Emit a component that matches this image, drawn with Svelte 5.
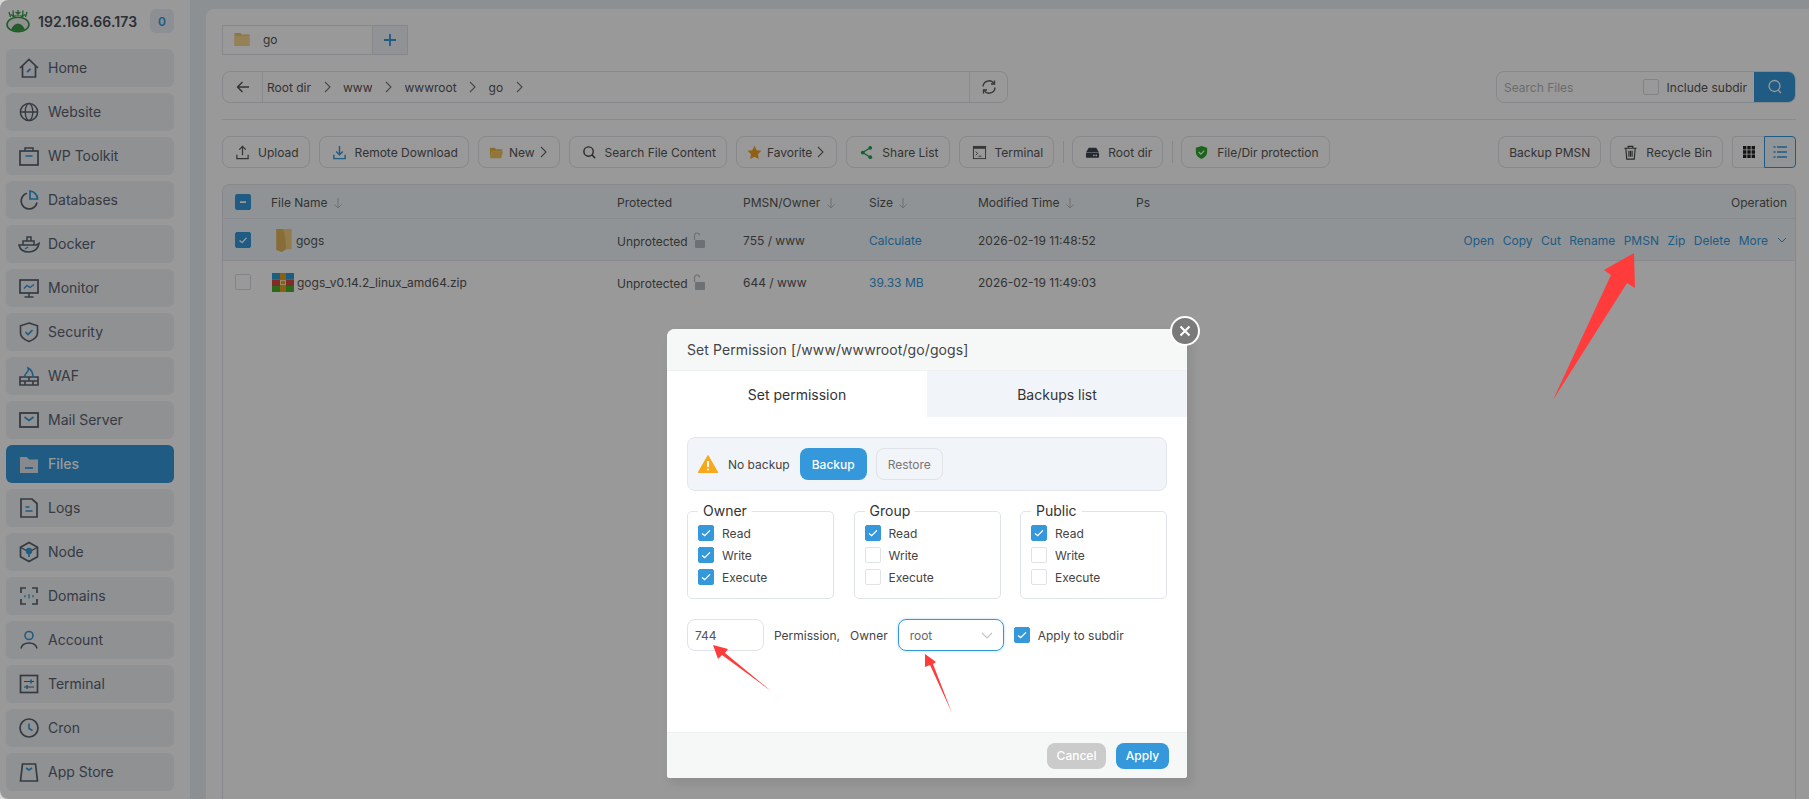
<script>
  const D = '#58606e';
  const B = '#3498db';
  const nav = [
    ['Home', `<path d="M3 12 12 3.5 21 12M5.5 10v11h13V10" fill="none" stroke="${D}" stroke-width="1.7"/><path d="M10 16l3.5-3" stroke="${B}" stroke-width="1.7"/>`],
    ['Website', `<circle cx="12" cy="12" r="8.6" fill="none" stroke="${D}" stroke-width="1.5"/><ellipse cx="12" cy="12" rx="3.8" ry="8.6" fill="none" stroke="${D}" stroke-width="1.3"/><path d="M3.4 12h17.2" stroke="${D}" stroke-width="1.3"/>`],
    ['WP Toolkit', `<rect x="3" y="7" width="18" height="14" fill="none" stroke="${D}" stroke-width="1.7"/><path d="M8 7V4h8v3" fill="none" stroke="${D}" stroke-width="1.5"/><path d="M8.5 12h7" stroke="${B}" stroke-width="1.7"/>`],
    ['Databases', `<path d="M10 5.2A8 8 0 1 0 20 14.5" fill="none" stroke="${D}" stroke-width="1.7"/><path d="M13 3.2a8 8 0 0 1 7.6 7.8H13z" fill="none" stroke="${B}" stroke-width="1.7"/>`],
    ['Docker', `<path d="M2 13h17c1.2 0 2.2-1 3-1.6-.5 4.6-4 8.6-10 8.6-5 0-9-2.400-10-7z" fill="none" stroke="${D}" stroke-width="1.6"/><path d="M6 13V9h4V5h4v4h3v4M10 9h4" fill="none" stroke="${D}" stroke-width="1.5"/><path d="M8 17l3-2" stroke="${B}" stroke-width="1.5"/>`],
    ['Monitor', `<rect x="3" y="4" width="18" height="13" fill="none" stroke="${D}" stroke-width="1.7"/><path d="M12 17v4M7.500 21h9" stroke="${D}" stroke-width="1.5"/><path d="M7 12.500l3-3 3 2 4-3" fill="none" stroke="${B}" stroke-width="1.4"/>`],
    ['Security', `<path d="M12 3l8.500 2.800V13c0 4-4 6.800-8.500 8.500C7.500 19.800 3.500 17 3.500 13V5.800z" fill="none" stroke="${D}" stroke-width="1.6"/><path d="M8.500 12l2.500 2.500 4.500-4.500" fill="none" stroke="${B}" stroke-width="1.6"/>`],
    ['WAF', `<path d="M3 13h18v8H3zM3 17h18M12 13v4M8 17v4M16 17v4" fill="none" stroke="${D}" stroke-width="1.6"/><path d="M8 13c-1-3 2-4 3-6 .4-1 .3-2 0-3 3 1.500 5 5 5 9" fill="none" stroke="${B}" stroke-width="1.5"/>`],
    ['Mail Server', `<rect x="3" y="5" width="18" height="14" fill="none" stroke="${D}" stroke-width="1.8"/><path d="M7.500 9l4.500 3.500L16.500 9" fill="none" stroke="${B}" stroke-width="1.6"/>`],
    ['Files', `<path d="M3 5h7l2 2.500h9V21H3z" fill="#dfe7ee"/><path d="M8 16h8" stroke="${B}" stroke-width="1.7"/>`],
    ['Logs', `<path d="M4 3h11l5 4.500V21H4z" fill="none" stroke="${D}" stroke-width="1.7"/><path d="M8.500 11h4M8.500 15h7" stroke="${B}" stroke-width="1.6"/>`],
    ['Node', `<path d="M12 2.500l8.500 4.800v9.400L12 21.500l-8.500-4.800V7.300z" fill="none" stroke="${D}" stroke-width="1.7"/><path d="M3.500 7.300L12 12l8.500-4.700" fill="none" stroke="${D}" stroke-width="1.3"/><circle cx="12" cy="11" r="3.200" fill="${B}"/><path d="M12 12v5" stroke="${B}" stroke-width="1.700"/>`],
    ['Domains', `<path d="M4 9V4h5M15 4h5v5M20 15v5h-5M9 20H4v-5" fill="none" stroke="${D}" stroke-width="1.7"/><path d="M8 11v2.500M12 10v4.500M16 11v2.500" stroke="${B}" stroke-width="1.200"/>`],
    ['Account', `<circle cx="12" cy="7.500" r="4" fill="none" stroke="${B}" stroke-width="1.6"/><path d="M4 20.500c.8-4 4-5.500 8-5.500s7.200 1.500 8 5.500" fill="none" stroke="${D}" stroke-width="1.600"/>`],
    ['Terminal', `<rect x="3.500" y="3.500" width="17" height="17" fill="none" stroke="${D}" stroke-width="1.700"/><path d="M7 9.500h10M7 15h10" stroke="${D}" stroke-width="1.200"/><path d="M14 7.500v4M10 13v4" stroke="${B}" stroke-width="1.700"/>`],
    ['Cron', `<circle cx="12" cy="12" r="9" fill="none" stroke="${D}" stroke-width="1.700"/><path d="M12 7.500V12.500l3.500 2" fill="none" stroke="${B}" stroke-width="1.600"/>`],
    ['App Store', `<path d="M5.500 4h13l2 17H3.500z" fill="none" stroke="${D}" stroke-width="1.700"/><path d="M9 8l3 2 3-2" fill="none" stroke="${B}" stroke-width="1.600"/>`]
  ];
  const perms = [
    ['Owner', [true, true, true]],
    ['Group', [true, false, false]],
    ['Public', [true, false, false]]
  ];
  const kinds = ['Read', 'Write', 'Execute'];
  const ops = ['Open', 'Copy', 'Cut', 'Rename', 'PMSN', 'Zip', 'Delete'];
</script>

<div class="page">
  <aside class="side">
    <div class="brand">
      <svg class="logo" viewBox="0 0 24 24" width="24" height="24">
        <ellipse cx="12" cy="15.500" rx="11" ry="7.300" fill="#f2f2f2" stroke="#3a9a44" stroke-width="1.600"/>
        <path d="M5 20.500c1.800-4 4.500-6 7-6s5.200 2 7 6c-4 2-10 2-14 0z" fill="#3a9a44"/>
        <path d="M4.500 8 3 3M7.500 7.500 7 1.500M5 5.500 7.500 7.500l3-1M12 7V1M12 5 9.500 3M12 5l2.500-2M16.500 7.500 17 1.500M19 5.500l-2.500 2-3-1M19.500 8 21 3" stroke="#3a9a44" stroke-width="1.300" fill="none"/>
      </svg>
      <span class="ip">192.168.66.173</span>
      <span class="count">0</span>
    </div>
    <nav>
      {#each nav as [label, icon]}
        <div class="item" class:on={label === 'Files'}>
          <svg viewBox="0 0 24 24" width="24" height="24">{@html icon}</svg>
          <span>{label}</span>
        </div>
      {/each}
    </nav>
  </aside>

  <main class="wrap">
    <div class="card">
      <div class="tabs">
        <div class="tab">
          <svg viewBox="0 0 24 24" width="18" height="18"><path d="M2 4h8l2 2h10v15H2z" fill="#f0c66e"/><path d="M2 8h20v13H2z" fill="#f7d98f"/></svg>
          <span>go</span>
        </div>
        <div class="plus">
          <svg viewBox="0 0 14 14" width="14" height="14"><path d="M7 1v12M1 7h12" stroke="#3498db" stroke-width="1.800"/></svg>
        </div>
      </div>

      <div class="pathline">
        <div class="crumbs">
          <div class="back">
            <svg viewBox="0 0 14 14" width="14" height="14"><path d="M13 7H1.500M6.500 2 1.500 7l5 5" fill="none" stroke="#555" stroke-width="1.400"/></svg>
          </div>
          <div class="trail">
            {#each ['Root dir', 'www', 'wwwroot', 'go'] as c}
              <span>{c}</span>
              <svg viewBox="0 0 7 12" width="7" height="12"><path d="M1 1l5 5-5 5" fill="none" stroke="#777" stroke-width="1.100"/></svg>
            {/each}
          </div>
          <div class="reload">
            <svg viewBox="0 0 16 16" width="16" height="16"><path d="M2 7.500A6 6 0 0 1 13 4.500M14 8.500A6 6 0 0 1 3 11.500" fill="none" stroke="#555" stroke-width="1.300"/><path d="M13.500 1.500v3.500H10M2.500 14.500V11H6" fill="none" stroke="#555" stroke-width="1.300"/></svg>
          </div>
        </div>
        <div class="search">
          <span class="ph">Search Files</span>
          <i class="box small"></i>
          <span class="inc">Include subdir</span>
          <div class="sbtn">
            <svg viewBox="0 0 16 16" width="16" height="16"><circle cx="7.500" cy="7" r="5.500" fill="none" stroke="#fff" stroke-width="1.300"/><path d="M11 11l3 3" stroke="#fff" stroke-width="1.300"/></svg>
          </div>
        </div>
      </div>

      <div class="rule"></div>

      <div class="tools">
        <button>
          <svg viewBox="0 0 16 16" width="15" height="15"><path d="M8 11V2M4.500 5 8 1.500 11.500 5M2 10.500V14.500h12v-4" fill="none" stroke="#555" stroke-width="1.300"/></svg>Upload
        </button>
        <button>
          <svg viewBox="0 0 16 16" width="15" height="15"><path d="M8 1v9M4.500 7 8 10.500 11.500 7M2 10.500V14.500h12v-4" fill="none" stroke="#3498db" stroke-width="1.500"/></svg>Remote Download
        </button>
        <button class="tight">
          <svg viewBox="0 0 16 16" width="15" height="15"><path d="M1 3h5l1.500 1.500H14V7H3L1 13z" fill="#e8b64c"/><path d="M3 7h12l-2 7H1z" fill="#f2c462"/></svg>New
          <svg viewBox="0 0 7 12" width="7" height="12"><path d="M1 1l5 5-5 5" fill="none" stroke="#666" stroke-width="1.100"/></svg>
        </button>
        <button>
          <svg viewBox="0 0 16 16" width="15" height="15"><circle cx="7" cy="7" r="5" fill="none" stroke="#444" stroke-width="1.500"/><path d="M10.500 10.500 14 14" stroke="#444" stroke-width="1.600"/></svg>Search File Content
        </button>
        <button class="tight">
          <svg viewBox="0 0 16 16" width="15" height="15"><path d="M8 .8l2.300 4.700 5 .7-3.600 3.600.9 5.200L8 12.500 3.400 15l.9-5.200L.7 6.200l5-.7z" fill="#f0a020"/></svg>Favorite
          <svg viewBox="0 0 7 12" width="7" height="12"><path d="M1 1l5 5-5 5" fill="none" stroke="#666" stroke-width="1.100"/></svg>
        </button>
        <button>
          <svg viewBox="0 0 16 16" width="15" height="15"><path d="M12 3 4 8l8 5" fill="none" stroke="#20a050" stroke-width="1.400"/><circle cx="12" cy="3" r="2" fill="#20a050"/><circle cx="4" cy="8" r="2" fill="#20a050"/><circle cx="12" cy="13" r="2" fill="#20a050"/></svg>Share List
        </button>
        <button>
          <svg viewBox="0 0 16 16" width="15" height="15"><rect x="1.500" y="1.500" width="13" height="13" fill="none" stroke="#555"/><path d="M1.500 3h13" stroke="#555" stroke-width="2"/><path d="M4 7l2 2-2 2M7 12h3" fill="none" stroke="#555"/></svg>Terminal
        </button>
        <i class="sep"></i>
        <button>
          <svg viewBox="0 0 16 16" width="15" height="15"><path d="M4 3h8l3 5H1z" fill="#3d4450"/><rect x="1" y="8.500" width="14" height="5" rx="1" fill="#3d4450"/><circle cx="12" cy="11" r=".9" fill="#fff"/><circle cx="9.500" cy="11" r=".9" fill="#fff"/></svg>Root dir
        </button>
        <i class="sep"></i>
        <button>
          <svg viewBox="0 0 16 16" width="15" height="15"><path d="M8 1l6 2v5c0 3-2.500 5.500-6 7-3.500-1.500-6-4-6-7V3z" fill="#2ea82e"/><path d="M5 7.500l2.200 2.200L11 6" fill="none" stroke="#fff" stroke-width="1.300"/></svg>File/Dir protection
        </button>
        <div class="grow"></div>
        <button class="bp">Backup PMSN</button>
        <button>
          <svg viewBox="0 0 16 16" width="15" height="15"><path d="M1.500 3.500h13M5.500 3.500V1.500h5v2M3 3.500l1 11.500h8l1-11.500M6.300 6v6.500M8 6v6.500M9.700 6v6.500" fill="none" stroke="#444" stroke-width="1.200"/></svg>Recycle Bin
        </button>
        <div class="views">
          <div class="view">
            <svg viewBox="0 0 14 14" width="14" height="14"><path d="M1 1h3.400v3.400H1zM5.300 1h3.400v3.400H5.300zM9.600 1H13v3.400H9.600zM1 5.300h3.400v3.400H1zM5.300 5.300h3.400v3.400H5.300zM9.600 5.300H13v3.400H9.600zM1 9.600h3.400V13H1zM5.300 9.600h3.400V13H5.300zM9.600 9.600H13V13H9.600z" fill="#222"/></svg>
          </div>
          <div class="view act">
            <svg viewBox="0 0 14 14" width="14" height="14"><path d="M4 2h10M4 7h10M4 12h10M.5 2h2M.5 7h2M.5 12h2" stroke="#3498db" stroke-width="1.400"/></svg>
          </div>
        </div>
      </div>

      <div class="table">
        <div class="row head">
          <i class="box on"><svg viewBox="0 0 16 16"><path d="M4.500 8h7" stroke="#fff" stroke-width="2"/></svg></i>
          <span>File Name <svg class="sort" viewBox="0 0 10 12" width="10" height="12"><path d="M5 1v10M1.500 7.500 5 11l3.500-3.500" fill="none" stroke="#bbb"/></svg></span>
          <span>Protected</span>
          <span>PMSN/Owner <svg class="sort" viewBox="0 0 10 12" width="10" height="12"><path d="M5 1v10M1.500 7.500 5 11l3.500-3.500" fill="none" stroke="#bbb"/></svg></span>
          <span>Size <svg class="sort" viewBox="0 0 10 12" width="10" height="12"><path d="M5 1v10M1.500 7.500 5 11l3.500-3.500" fill="none" stroke="#bbb"/></svg></span>
          <span>Modified Time <svg class="sort" viewBox="0 0 10 12" width="10" height="12"><path d="M5 1v10M1.500 7.500 5 11l3.500-3.500" fill="none" stroke="#bbb"/></svg></span>
          <span>Ps</span>
          <span class="end">Operation</span>
        </div>

        <div class="row sel">
          <i class="box on"><svg viewBox="0 0 16 16"><path d="M4 8.500l3 2.500 5-5.500" fill="none" stroke="#fff" stroke-width="1.500"/></svg></i>
          <span class="name">
            <svg viewBox="0 0 18 26" width="18" height="25"><path d="M1 1h16v21H7v3l-6-2z" fill="#f5cf7f"/><path d="M1 1h7c2 6 3 12 3 21l-4 3-6-2z" fill="#e2b65e"/></svg>
            gogs
          </span>
          <span class="prot">Unprotected
            <svg viewBox="0 0 14 16" width="14" height="16"><path d="M3.500 8V3.500a2.500 2.500 0 0 1 5 0" fill="none" stroke="#bbb" stroke-width="1.200"/><rect x="4" y="8" width="10" height="8" rx="1" fill="#b5bcc4"/></svg>
          </span>
          <span>755 / www</span>
          <span class="link">Calculate</span>
          <span>2026-02-19 11:48:52</span>
          <span></span>
          <span class="ops">
            {#each ops as o}<span class="link">{o}</span>{/each}
            <span class="link more">More
              <svg viewBox="0 0 10 6" width="10" height="6"><path d="M1 1l4 4 4-4" fill="none" stroke="#3498db"/></svg>
            </span>
          </span>
        </div>

        <div class="row plain">
          <i class="box"></i>
          <span class="name zip">
            <svg viewBox="0 0 22 19" width="22" height="19"><rect width="22" height="6.500" fill="#2a9fd8"/><rect y="6.500" width="22" height="6.500" fill="#d64a42"/><rect y="13" width="22" height="6" fill="#4caf2e"/><rect x="8" width="6" height="19" fill="#e8a020"/><rect x="8.500" y="7.500" width="5" height="4" fill="none" stroke="#f8e8b0"/></svg>
            gogs_v0.14.2_linux_amd64.zip
          </span>
          <span class="prot">Unprotected
            <svg viewBox="0 0 14 16" width="14" height="16"><path d="M3.500 8V3.500a2.500 2.500 0 0 1 5 0" fill="none" stroke="#bbb" stroke-width="1.200"/><rect x="4" y="8" width="10" height="8" rx="1" fill="#b5bcc4"/></svg>
          </span>
          <span>644 / www</span>
          <span class="link">39.33 MB</span>
          <span>2026-02-19 11:49:03</span>
        </div>
      </div>
    </div>
  </main>

  <div class="shade"></div>

  <svg class="arrows" viewBox="0 0 1809 799" width="1809" height="799">
    <path d="M1634 253l1 35-8-5-74 117 58-125-7-5z" fill="#ff3b3b"/>
    <path d="M713 645l15 4-3 4 46 38-49-36-4 4z" fill="#ff3b3b"/>
    <path d="M925 654l11 8-3 2 19 49-22-48-5 2z" fill="#ff3b3b"/>
  </svg>

  <section class="modal">
    <header>Set Permission [/www/wwwroot/go/gogs]</header>
    <div class="mtabs">
      <div class="mtab cur">Set permission</div>
      <div class="mtab">Backups list</div>
    </div>
    <div class="body">
      <div class="notice">
        <svg viewBox="0 0 20 18" width="20" height="18"><path d="M10 .5 19.800 17.500H.2z" fill="#f7a81b" stroke="#f7a81b" stroke-linejoin="round"/><path d="M10 6v6" stroke="#fff" stroke-width="2"/><circle cx="10" cy="14.500" r="1.100" fill="#fff"/></svg>
        <span class="nb">No backup</span>
        <span class="bk">Backup</span>
        <span class="rs">Restore</span>
      </div>

      <div class="groups">
        {#each perms as [title, vals]}
          <fieldset>
            <legend>{title}</legend>
            {#each kinds as k, i}
              <div class="perm">
                <i class="cbx" class:on={vals[i]}>
                  {#if vals[i]}<svg viewBox="0 0 16 16"><path d="M3.500 8.500l3 2.500 6-6" fill="none" stroke="#fff" stroke-width="1.600"/></svg>{/if}
                </i>
                {k}
              </div>
            {/each}
          </fieldset>
        {/each}
      </div>

      <div class="line">
        <div class="num">744</div>
        <span class="l1">Permission,</span>
        <span class="l2">Owner</span>
        <div class="sel2">
          root
          <svg viewBox="0 0 12 7" width="12" height="7"><path d="M1 1l5 5 5-5" fill="none" stroke="#c4c4c4" stroke-width="1.100"/></svg>
        </div>
        <i class="cbx on"><svg viewBox="0 0 16 16"><path d="M3.500 8.500l3 2.500 6-6" fill="none" stroke="#fff" stroke-width="1.600"/></svg></i>
        <span class="l3">Apply to subdir</span>
      </div>
    </div>
    <footer>
      <span class="cancel">Cancel</span>
      <span class="apply">Apply</span>
    </footer>
    <div class="close">
      <svg viewBox="0 0 12 12" width="12" height="12"><path d="M1.500 1.500l9 9M10.500 1.500l-9 9" stroke="#fff" stroke-width="2"/></svg>
    </div>
  </section>
</div>

<style>
  :global(body) {
    margin: 0;
    background: #d8d8d8;
    font-family: Inter, "Liberation Sans", sans-serif;
    overflow: hidden;
  }
  .page {
    position: relative;
    width: 1809px;
    height: 799px;
    display: flex;
    overflow: hidden;
    border-radius: 8px 0 0 8px;
    font-size: 12px;
    color: #555;
  }
  .side {
    width: 190px;
    flex: none;
    background: #fff;
    box-sizing: border-box;
    padding: 9px 16px 0 6px;
  }
  .brand {
    display: flex;
    align-items: center;
    height: 24px;
    margin-bottom: 16px;
  }
  .logo { flex: none; }
  .ip {
    margin-left: 8px;
    flex: 1;
    font-size: 14px;
    font-weight: 600;
    letter-spacing: 0.1px;
    color: #4a4f5a;
  }
  .count {
    width: 24px;
    height: 24px;
    border-radius: 6px;
    background: #e9eff5;
    color: #3498db;
    font-weight: 600;
    font-size: 12px;
    display: flex;
    align-items: center;
    justify-content: center;
  }
  nav {
    display: flex;
    flex-direction: column;
    gap: 6px;
  }
  .item {
    height: 38px;
    border-radius: 6px;
    background: #eef2f6;
    display: flex;
    align-items: center;
    gap: 7px;
    padding: 0 0 1px 11px;
    font-size: 14px;
    color: #5c6270;
    box-sizing: border-box;
  }
  .item.on {
    background: #3498db;
    color: #fff;
    font-weight: 500;
  }
  .wrap {
    flex: 1;
    background: #ebf0f5;
    padding: 9px 0 0 16px;
    min-width: 0;
  }
  .card {
    height: 100%;
    box-sizing: border-box;
    background: #fff;
    border-radius: 8px 0 0 0;
    padding: 16px 13px 0 16px;
    display: flex;
    flex-direction: column;
  }
  .tabs {
    display: flex;
    width: 186px;
    height: 30px;
    box-sizing: border-box;
    border: 1px solid #dfe3e8;
    background: #fff;
    margin-bottom: 16px;
  }
  .tab {
    flex: 1;
    display: flex;
    align-items: center;
    gap: 12px;
    padding: 0 0 2px 10px;
    color: #555;
  }
  .plus {
    width: 34px;
    border-left: 1px solid #dfe3e8;
    background: #f1f4f8;
    display: flex;
    align-items: center;
    justify-content: center;
  }
  .pathline {
    display: flex;
    justify-content: space-between;
    height: 32px;
  }
  .crumbs {
    width: 786px;
    display: flex;
    box-sizing: border-box;
    border: 1px solid #dfe3e8;
    border-radius: 8px;
  }
  .back {
    width: 39px;
    border-right: 1px solid #e4e7eb;
    display: flex;
    align-items: center;
    justify-content: center;
  }
  .trail {
    flex: 1;
    display: flex;
    align-items: center;
    gap: 12.5px;
    padding-left: 4px;
    color: #555;
  }
  .reload {
    width: 37px;
    border-left: 1px solid #e4e7eb;
    display: flex;
    align-items: center;
    justify-content: center;
  }
  .search {
    width: 300px;
    display: flex;
    align-items: center;
    box-sizing: border-box;
    border: 1px solid #dfe3e8;
    border-radius: 8px;
    padding-left: 7px;
    overflow: hidden;
  }
  .ph {
    flex: 1;
    color: #b5b5b5;
  }
  .box {
    width: 16px;
    height: 16px;
    flex: none;
    box-sizing: border-box;
    border: 1px solid #d8dce1;
    border-radius: 2px;
    display: block;
    background: #fff;
  }
  .box.on {
    background: #3498db;
    border-color: #3498db;
  }
  .box svg, .cbx svg {
    display: block;
    width: 100%;
    height: 100%;
  }
  .inc {
    margin: 0 7px 0 8px;
    color: #555;
    white-space: nowrap;
  }
  .sbtn {
    width: 42px;
    height: 32px;
    margin-right: -1px;
    background: #3498db;
    display: flex;
    align-items: center;
    justify-content: center;
  }
  .rule {
    height: 1px;
    background: #e4e7eb;
    margin: 16px 0;
  }
  .tools {
    display: flex;
    align-items: center;
    gap: 9px;
    height: 32px;
    margin-bottom: 16px;
  }
  .tools button {
    height: 32px;
    display: flex;
    align-items: center;
    gap: 8px;
    padding: 0 10px 0 12px;
    border: 1px solid #dfe3e8;
    border-radius: 8px;
    background: #fff;
    font: inherit;
    font-size: 12px;
    color: #555;
    white-space: nowrap;
  }
  .tools button.tight { gap: 5px; padding: 0 12px 0 10px; }
  .tools button.bp { padding: 0 10px; }
  .sep {
    width: 1px;
    height: 22px;
    margin: 0 -0.5px;
    background: #e0e3e7;
  }
  .grow { flex: 1; }
  .views { display: flex; }
  .view {
    width: 32px;
    height: 32px;
    box-sizing: border-box;
    border: 1px solid #dfe3e8;
    display: flex;
    align-items: center;
    justify-content: center;
  }
  .view:first-child { border-radius: 4px 0 0 4px; border-right: 0; }
  .view.act { border-color: #3498db; border-radius: 0 4px 4px 0; background: #f2f8fd; }
  .table {
    flex: 1;
    border: 1px solid #dfe3e8;
    border-bottom: 0;
    border-radius: 8px 8px 0 0;
    overflow: hidden;
  }
  .row {
    display: grid;
    grid-template-columns: 36px 346px 126px 126px 109px 158px 1fr auto;
    align-items: center;
    padding: 0 8px 0 12px;
    height: 42px;
    box-sizing: border-box;
    color: #555;
    border-bottom: 1px solid #e4e7eb;
  }
  .row.head {
    height: 34px;
    padding-top: 1px;
    background: #f0f5f8;
  }
  .row.sel { background: #f0f5f8; padding-top: 1px; }
  .row.plain { border-bottom: 0; }
  .sort { vertical-align: -2px; margin-left: 2px; }
  .name {
    display: flex;
    align-items: center;
    gap: 3px;
    margin-left: 4px;
  }
  .name.zip { margin-left: 1px; gap: 3px; }
  .prot svg { vertical-align: -2px; }
  .link { color: #3498db; }
  .end { text-align: right; }
  .ops {
    display: flex;
    gap: 8.5px;
    align-items: center;
  }
  .more {
    display: flex;
    align-items: center;
    gap: 9px;
  }
  .shade {
    position: absolute;
    inset: 0;
    background: rgba(0, 0, 0, 0.4);
  }
  .arrows {
    position: absolute;
    left: 0;
    top: 0;
    z-index: 3;
    pointer-events: none;
  }
  .modal {
    position: absolute;
    left: 667px;
    top: 329px;
    width: 520px;
    height: 449px;
    background: #fff;
    border-radius: 8px 8px 3px 3px;
    box-shadow: 4px 5px 8px 2px rgba(0, 0, 0, 0.07);
    display: flex;
    flex-direction: column;
    z-index: 2;
    font-size: 12px;
    color: #555;
  }
  header {
    height: 42px;
    flex: none;
    box-sizing: border-box;
    padding-left: 20px;
    display: flex;
    align-items: center;
    background: #f6f8f8;
    border-bottom: 1px solid #eef0f1;
    border-radius: 8px 8px 0 0;
    font-size: 14px;
    letter-spacing: 0.09px;
    color: #444;
  }
  .mtabs {
    display: flex;
    height: 46px;
    flex: none;
  }
  .mtab {
    flex: 1;
    display: flex;
    align-items: center;
    justify-content: center;
    background: #f1f4f9;
    font-size: 14px;
    color: #333;
  }
  .mtab.cur { background: #fff; }
  .body {
    flex: 1;
    padding: 20px;
  }
  .notice {
    height: 54px;
    box-sizing: border-box;
    display: flex;
    align-items: center;
    padding-left: 10px;
    background: #f1f4f9;
    border: 1px solid #e2e6ec;
    border-radius: 8px;
    margin-bottom: 13px;
  }
  .nb { margin-left: 10px; font-size: 12px; color: #444; }
  .bk, .rs {
    height: 32px;
    display: flex;
    align-items: center;
    padding: 0 12px;
    border-radius: 8px;
    box-sizing: border-box;
  }
  .bk { margin-left: 10px; background: #3498db; color: #fff; font-weight: 500; }
  .rs { margin-left: 9px; padding: 0 11px; border: 1px solid #dfe3e8; color: #777; }
  .groups {
    display: flex;
    justify-content: space-between;
    margin-bottom: 20px;
  }
  fieldset {
    width: 147px;
    height: 95px;
    margin: 0;
    box-sizing: border-box;
    padding: 7px 10px 0;
    border: 1px solid #dfe3ec;
    border-radius: 5px;
    position: relative;
  }
  legend {
    font-size: 14px;
    color: #333;
    padding: 0 5px;
    margin-left: 0;
    line-height: 14px;
    position: relative;
  }
  .perm {
    display: flex;
    align-items: center;
    gap: 8px;
    height: 16px;
    margin-bottom: 6px;
    color: #444;
  }
  .cbx {
    width: 16px;
    height: 16px;
    flex: none;
    display: block;
    box-sizing: border-box;
    border: 1px solid #dfe3e8;
    border-radius: 2px;
    background: #fff;
  }
  .cbx.on { background: #3498db; border-color: #3498db; }
  .line {
    display: flex;
    align-items: center;
    height: 32px;
  }
  .num {
    width: 77px;
    height: 32px;
    box-sizing: border-box;
    border: 1px solid #dfe3ec;
    border-radius: 8px;
    padding-left: 7px;
    display: flex;
    align-items: center;
    color: #555;
  }
  .l1 { margin-left: 10px; color: #444; }
  .l2 { margin-left: 10px; color: #444; }
  .sel2 {
    margin-left: 10px;
    width: 106px;
    height: 32px;
    box-sizing: border-box;
    border: 1px solid #3498db;
    border-radius: 8px;
    box-shadow: 0 0 3px rgba(52, 152, 219, 0.4);
    display: flex;
    align-items: center;
    justify-content: space-between;
    padding: 0 10px 0 11px;
    color: #666;
    flex: none;
  }
  .line .cbx { margin-left: 10px; }
  .l3 { margin-left: 8px; color: #444; }
  footer {
    height: 46px;
    flex: none;
    background: #f6f8f8;
    border-top: 1px solid #eef0f1;
    border-radius: 0 0 3px 3px;
    box-sizing: border-box;
    display: flex;
    justify-content: flex-end;
    align-items: center;
    gap: 10px;
    padding-right: 18px;
  }
  .cancel, .apply {
    height: 26px;
    display: flex;
    align-items: center;
    justify-content: center;
    border-radius: 8px;
    color: #fff;
    font-weight: 500;
  }
  .cancel { width: 59px; background: #cbcbcb; }
  .apply { width: 53px; background: #3498db; }
  .close {
    position: absolute;
    right: -13px;
    top: -13px;
    width: 30px;
    height: 30px;
    box-sizing: border-box;
    border: 2px solid #fff;
    border-radius: 50%;
    background: #7a7a7a;
    display: flex;
    align-items: center;
    justify-content: center;
  }
</style>
